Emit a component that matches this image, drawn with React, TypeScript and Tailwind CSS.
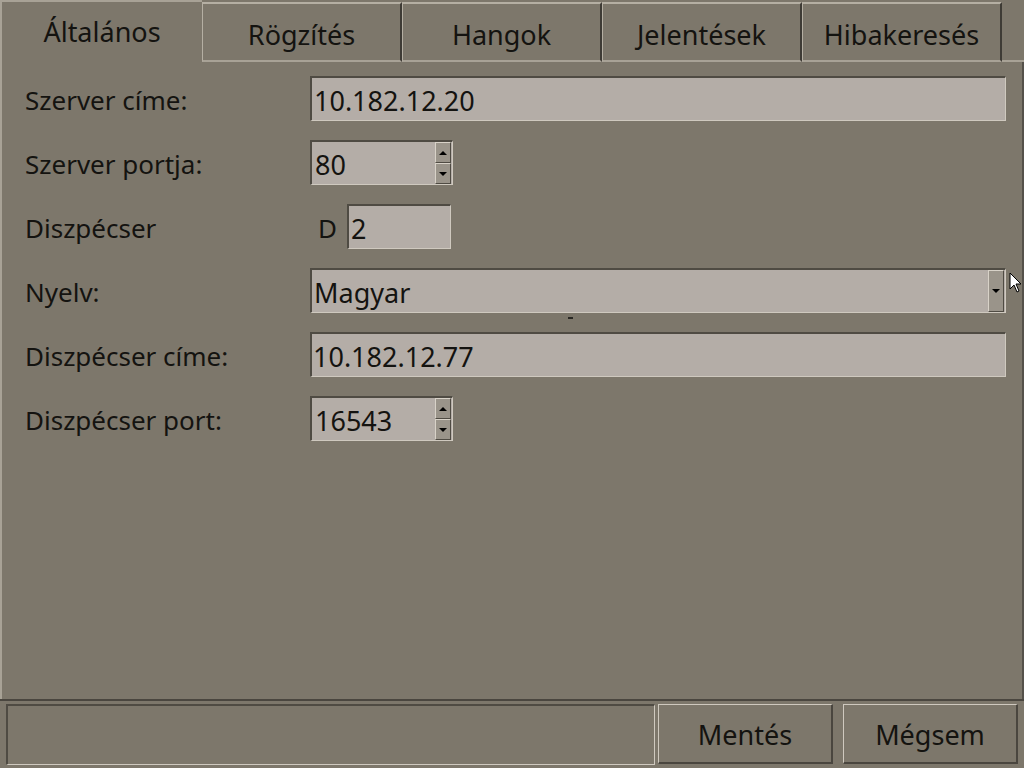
import React from "react";

const TABS = ["Általános", "Rögzítés", "Hangok", "Jelentések", "Hibakeresés"];

function Field({ children, className }: { children: React.ReactNode; className: string }) {
  return (
    <div
      className={
        "flex h-[45px] items-center border-t-2 border-l-2 border-b border-r border-t-[#4f4b43] border-l-[#4f4b43] border-b-[#cfc9bf] border-r-[#cfc9bf] bg-[#b4ada7] pt-[3px] text-[27px] " +
        className
      }
    >
      {children}
    </div>
  );
}

function Spin({ value }: { value: string }) {
  return (
    <Field className="w-[143px] !pt-0">
      <div className="flex-1 pl-[3px] pt-[3px]">{value}</div>
      <div className="mr-[1px] flex h-full w-[16px] flex-col">
        <div className="flex flex-1 items-center justify-center border border-t-[#d8d2c8] border-l-[#d8d2c8] border-b-[#4f4b43] border-r-[#4f4b43] bg-[#9a948a]">
          <div className="h-0 w-0 border-x-[4px] border-b-[4px] border-x-transparent border-b-black" />
        </div>
        <div className="flex flex-1 items-center justify-center border border-t-[#d8d2c8] border-l-[#d8d2c8] border-b-[#4f4b43] border-r-[#4f4b43] bg-[#9a948a]">
          <div className="h-0 w-0 border-x-[4px] border-t-[4px] border-x-transparent border-t-black" />
        </div>
      </div>
    </Field>
  );
}

function Row({ label, children }: { label: string; children: React.ReactNode }) {
  return (
    <div className="mb-[19px] flex h-[45px] items-center">
      <div className="w-[285px] shrink-0 pt-[3px]">{label}</div>
      {children}
    </div>
  );
}

export default function App() {
  return (
    <div
      className="relative flex h-[768px] w-[1024px] flex-col overflow-hidden bg-[#7d776b] text-[26px] leading-none text-[#141310]"
      style={{ fontFamily: '"Noto Sans", "Open Sans", sans-serif' }}
    >
      {/* Tabs */}
      <div className="flex h-[62px] shrink-0 text-[27px]">
        {TABS.map((t, i) =>
          i === 0 ? (
            <div
              key={t}
              className="flex h-[62px] w-[202px] items-center justify-center border-l-2 border-t-2 border-[#a8a296] pb-[2px]"
            >
              {t}
            </div>
          ) : (
            <div
              key={t}
              className="mt-[2px] flex h-[60px] w-[200px] items-center justify-center border-t-2 border-l border-r-2 border-b-2 border-t-[#b5afa3] border-l-[#b5afa3] border-r-[#3e3b35] border-b-[#a8a296] pt-[4px]"
            >
              {t}
            </div>
          )
        )}
        <div className="flex-1 border-b-2 border-[#a8a296]" />
      </div>

      {/* Panel */}
      <div className="flex-1 border-l-2 border-r-2 border-l-[#a8a296] border-r-[#55514a] pl-[23px] pt-[14px]">
        <Row label="Szerver címe:">
          <Field className="w-[696px]">
            <div className="pl-[2px]">10.182.12.20</div>
          </Field>
        </Row>
        <Row label="Szerver portja:">
          <Spin value="80" />
        </Row>
        <Row label="Diszpécser">
          <div className="w-[37px] pl-[8px] pt-[3px]">D</div>
          <Field className="w-[104px]">
            <div className="pl-[2px]">2</div>
          </Field>
        </Row>
        <Row label="Nyelv:">
          <Field className="relative w-[696px] !pt-0">
            <div className="flex-1 pl-[2px] pt-[3px]">Magyar</div>
            <div className="mr-[1px] flex h-full w-[16px] items-center justify-center border border-t-[#d8d2c8] border-l-[#d8d2c8] border-b-[#4f4b43] border-r-[#4f4b43] bg-[#9a948a]">
              <div className="h-0 w-0 border-x-[4px] border-t-[4px] border-x-transparent border-t-black" />
            </div>
            <div className="absolute left-[256px] top-[47px] h-[2px] w-[5px] bg-[#2a2824]" />
          </Field>
        </Row>
        <Row label="Diszpécser címe:">
          <Field className="w-[696px]">
            <div className="pl-[1px]">10.182.12.77</div>
          </Field>
        </Row>
        <Row label="Diszpécser port:">
          <Spin value="16543" />
        </Row>
      </div>

      {/* Bottom bar */}
      <div className="flex h-[69px] shrink-0 border-t-2 border-t-[#4a463f] pt-[3px] text-[27px]">
        <div className="ml-[6px] h-[61px] w-[649px] border-t-2 border-l-2 border-b border-r border-t-[#4f4b43] border-l-[#4f4b43] border-b-[#cfc9bf] border-r-[#cfc9bf]" />
        <button className="ml-[3px] flex h-[60px] w-[175px] items-center justify-center border border-t-[#cfc9bf] border-l-[#cfc9bf] border-b-2 border-r-2 border-b-[#4a463f] border-r-[#4a463f] pt-[2px]">
          Mentés
        </button>
        <button className="ml-[10px] flex h-[60px] w-[175px] items-center justify-center border border-t-[#cfc9bf] border-l-[#cfc9bf] border-b-2 border-r-2 border-b-[#4a463f] border-r-[#4a463f] pt-[2px]">
          Mégsem
        </button>
      </div>

      {/* mouse cursor */}
      <svg className="absolute left-[1009px] top-[272px]" width="14" height="22" viewBox="0 0 14 22">
        <path d="M1 1 L1 17 L5 13 L8 20 L10 19 L7 12 L12 12 Z" fill="#fff" stroke="#000" strokeWidth="1" />
      </svg>
    </div>
  );
}
